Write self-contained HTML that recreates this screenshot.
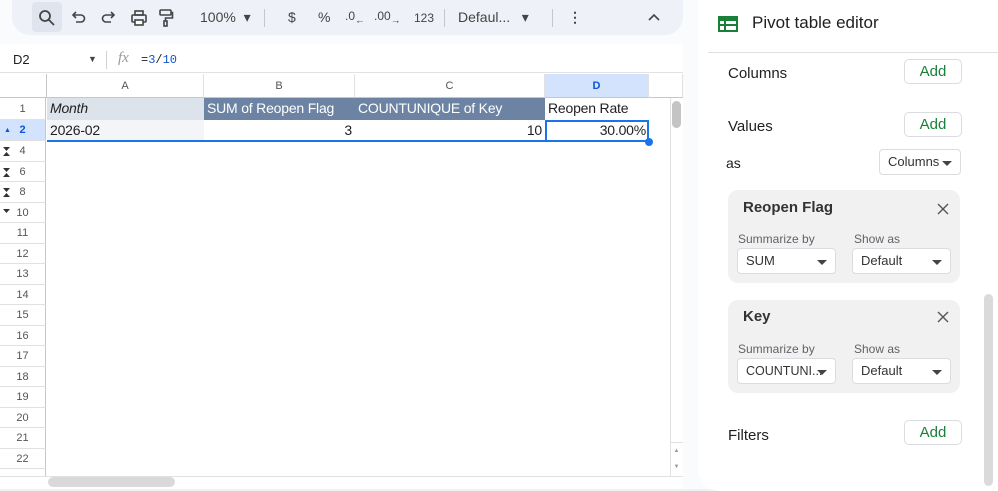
<!DOCTYPE html><html><head><style>
*{box-sizing:border-box;margin:0;padding:0}
body{width:998px;height:491px;overflow:hidden;background:#f9fbfd;font-family:"Liberation Sans",Arial,sans-serif;position:relative;color:#1f1f1f}
.a{position:absolute}
.tb{left:12px;top:0;width:671px;height:35px;background:#eef2f8;border-radius:0 0 18px 18px}
.ti{position:absolute;top:9px;font-size:14px;color:#444}
.sheet{left:0;top:44px;width:683px;height:447px;background:#fff}
.rh{left:0;width:46px;font-size:11px;color:#555;text-align:center;border-bottom:1px solid #e1e1e1;border-right:1px solid #c7c7c7;background:#fff}
.ch{top:74px;height:24px;font-size:11px;color:#555;text-align:center;line-height:24px;border-right:1px solid #e1e1e1;border-bottom:1px solid #c7c7c7;background:#fff}
.cell{font-size:14px;line-height:21px;padding:0 3px;white-space:nowrap;letter-spacing:-0.2px}
.panel{left:698px;top:0;width:300px;height:491px;background:#fff;border-radius:0 0 0 22px}
.lbl{font-size:15px;color:#1f1f1f}
.add{width:58px;height:25px;border:1px solid #dadce0;border-radius:5px;color:#188038;font-size:15px;text-align:center;line-height:23px;background:#fff}
.card{left:728px;width:232px;background:#f1f1f1;border-radius:10px}
.sel{background:#fff;border:1px solid #dadce0;border-radius:4px;height:26px;font-size:13px;line-height:24px;padding-left:8px;color:#333;white-space:nowrap;overflow:hidden}
.car{position:absolute;right:8px;top:11px;border-left:5px solid transparent;border-right:5px solid transparent;border-top:5px solid #444}
.sm{font-size:12px;color:#5f6368}
svg.i{position:absolute;top:9px}
</style></head><body>
<div class="a tb">
<div class="a" style="left:20px;top:2px;width:30px;height:30px;background:#dfe5ee;border-radius:4px"></div>
<svg class="i" style="left:26px" width="18" height="18" viewBox="0 0 18 18" fill="none" stroke="#444" stroke-width="1.8"><circle cx="7" cy="7" r="5"/><line x1="10.5" y1="10.5" x2="16" y2="16"/></svg>
<svg class="i" style="left:58px" width="16" height="16" viewBox="0 0 16 16" fill="none" stroke="#444" stroke-width="1.6"><path d="M4 6h7a3.5 3.5 0 010 7H6"/><path d="M6 3L3 6l3 3"/></svg>
<svg class="i" style="left:89px" width="16" height="16" viewBox="0 0 16 16" fill="none" stroke="#444" stroke-width="1.6"><path d="M12 6H5a3.5 3.5 0 000 7h5"/><path d="M10 3l3 3-3 3"/></svg>
<svg class="i" style="left:118px" width="18" height="18" viewBox="0 0 18 18" fill="none" stroke="#444" stroke-width="1.6"><rect x="5" y="2" width="8" height="4"/><rect x="2" y="6" width="14" height="7" rx="1"/><rect x="5" y="11" width="8" height="5" fill="#fff"/></svg>
<svg class="i" style="left:146px" width="16" height="18" viewBox="0 0 16 18" fill="none" stroke="#444" stroke-width="1.6"><rect x="2" y="1" width="11" height="5" rx="1"/><path d="M13 3.5h1.5V9H7.5v3"/><rect x="6" y="12" width="3" height="5"/></svg>
<span class="ti" style="left:188px">100% &nbsp;&#9662;</span>
<div class="a" style="left:252px;top:9px;width:1px;height:18px;background:#c7c7c7"></div>
<span class="ti" style="left:276px">$</span>
<span class="ti" style="left:306px">%</span>
<span class="ti" style="left:333px;font-size:12px">.0<sub>&#8592;</sub></span>
<span class="ti" style="left:362px;font-size:12px">.00<sub>&#8594;</sub></span>
<span class="ti" style="left:402px;font-size:12px;top:11px">123</span>
<div class="a" style="left:432px;top:9px;width:1px;height:18px;background:#c7c7c7"></div>
<span class="ti" style="left:446px">Defaul... &nbsp;&nbsp;&#9662;</span>
<div class="a" style="left:540px;top:9px;width:1px;height:18px;background:#c7c7c7"></div>
<span class="ti" style="left:556px;font-weight:bold">&#8942;</span>
<svg class="i" style="left:636px;top:13px" width="12" height="8" viewBox="0 0 12 8" fill="none" stroke="#444" stroke-width="1.6"><path d="M1 7l5-5 5 5"/></svg>
</div>
<div class="a sheet"></div>
<div class="a" style="left:0;top:47px;width:683px;height:26px;background:#fff;border-bottom:1px solid #e1e1e1"></div>
<span class="a" style="left:13px;top:52px;font-size:13px">D2</span>
<span class="a" style="left:88px;top:54px;font-size:9px;color:#444">&#9660;</span>
<div class="a" style="left:106px;top:51px;width:1px;height:18px;background:#d0d0d0"></div>
<span class="a" style="left:118px;top:50px;font-size:15px;color:#999;font-style:italic;font-family:'Liberation Serif',serif">fx</span>
<span class="a" style="left:141px;top:53px;font-size:12px;font-family:'Liberation Mono',monospace">=<span style="color:#1155cc">3</span>/<span style="color:#1155cc">10</span></span>
<div class="a" style="left:0;top:74px;width:47px;height:24px;background:#fff;border-right:1px solid #c7c7c7;border-bottom:1px solid #c7c7c7"></div>
<div class="a ch" style="left:47px;width:157px">A</div>
<div class="a ch" style="left:204px;width:151px">B</div>
<div class="a ch" style="left:355px;width:190px">C</div>
<div class="a ch" style="left:545px;width:104px;background:#d3e3fd;color:#0b57d0;font-weight:bold">D</div>
<div class="a ch" style="left:649px;width:34px"></div>
<div class="a rh" style="top:98px;height:22px;line-height:22px">1</div>
<div class="a rh" style="top:120px;height:21px;line-height:21px;background:#d3e3fd;color:#0b57d0;font-weight:bold"><span style="font-size:7px;position:absolute;left:4px">&#9650;</span>2</div>
<div id="rows"></div>
<div class="a cell" style="left:47px;top:98px;width:157px;height:22px;background:#dde3ea;font-style:italic">Month</div>
<div class="a cell" style="left:204px;top:98px;width:151px;height:22px;background:#6d83a3;color:#fff">SUM of Reopen Flag</div>
<div class="a cell" style="left:355px;top:98px;width:190px;height:22px;background:#6d83a3;color:#fff">COUNTUNIQUE of Key</div>
<div class="a cell" style="left:545px;top:98px;width:104px;height:22px">Reopen Rate</div>
<div class="a cell" style="left:47px;top:120px;width:157px;height:21px;background:#f3f5f8">2026-02</div>
<div class="a cell" style="left:204px;top:120px;width:151px;height:21px;text-align:right">3</div>
<div class="a cell" style="left:355px;top:120px;width:190px;height:21px;text-align:right">10</div>
<div class="a cell" style="left:545px;top:120px;width:104px;height:21px;text-align:right">30.00%</div>
<div class="a" style="left:47px;top:140px;width:500px;height:2px;background:#1a73e8"></div>
<div class="a" style="left:545px;top:120px;width:104px;height:22px;border:2px solid #1a73e8"></div>
<div class="a" style="left:645px;top:138px;width:8px;height:8px;border-radius:50%;background:#1a73e8"></div>
<div class="a" style="left:672px;top:101px;width:9px;height:27px;background:#c4c4c4;border-radius:5px"></div>
<div class="a" style="left:670px;top:98px;width:1px;height:378px;background:#e1e1e1"></div>
<div class="a" style="left:670px;top:442px;width:13px;height:34px;border-top:1px solid #e1e1e1;font-size:6px;color:#999;text-align:center;line-height:16px">&#9650;<br>&#9660;</div>
<div class="a" style="left:0;top:476px;width:683px;height:13px;border-top:1px solid #e1e1e1;background:#fff"></div>
<div class="a" style="left:48px;top:477px;width:127px;height:10px;background:#d9d9d9;border-radius:5px"></div>
<div class="a" style="left:0;top:489px;width:998px;height:2px;background:#eef1f5"></div>
<div class="a" style="left:702px;top:230px;font-size:10px;color:#666;line-height:6px">&#9679;<br>&#9679;<br>&#9679;</div>
<div class="a panel"></div>
<div class="a" style="left:708px;top:52px;width:290px;height:1px;background:#e0e0e0"></div>
<svg class="a" style="left:718px;top:16px" width="20" height="16" viewBox="0 0 20 16"><rect x="1" y="1" width="18" height="14" fill="none" stroke="#188038" stroke-width="2"/><rect x="1" y="1" width="18" height="4" fill="#188038"/><line x1="1" y1="9" x2="19" y2="9" stroke="#188038" stroke-width="2"/><line x1="7" y1="5" x2="7" y2="15" stroke="#188038" stroke-width="2"/></svg>
<span class="a" style="left:752px;top:13px;font-size:17px">Pivot table editor</span>
<span class="a lbl" style="left:728px;top:65px">Columns</span>
<div class="a add" style="left:904px;top:59px">Add</div>
<span class="a lbl" style="left:728px;top:118px">Values</span>
<div class="a add" style="left:904px;top:112px">Add</div>
<span class="a" style="left:726px;top:155px;font-size:14px">as</span>
<div class="a sel" style="left:879px;top:149px;width:82px;height:26px;padding-left:8px">Columns<span class="car"></span></div>
<div class="a card" style="top:190px;height:93px"></div>
<span class="a" style="left:743px;top:199px;font-size:15px;font-weight:bold;color:#333">Reopen Flag</span>
<svg class="a" style="left:937px;top:203px" width="12" height="12" viewBox="0 0 12 12" stroke="#555" stroke-width="1.4"><path d="M1 1l10 10M11 1L1 11"/></svg>
<span class="a sm" style="left:738px;top:232px">Summarize by</span>
<span class="a sm" style="left:854px;top:232px">Show as</span>
<div class="a sel" style="left:737px;top:248px;width:99px">SUM<span class="car"></span></div>
<div class="a sel" style="left:852px;top:248px;width:99px">Default<span class="car"></span></div>
<div class="a card" style="top:300px;height:93px"></div>
<span class="a" style="left:743px;top:308px;font-size:15px;font-weight:bold;color:#333">Key</span>
<svg class="a" style="left:937px;top:311px" width="12" height="12" viewBox="0 0 12 12" stroke="#555" stroke-width="1.4"><path d="M1 1l10 10M11 1L1 11"/></svg>
<span class="a sm" style="left:738px;top:342px">Summarize by</span>
<span class="a sm" style="left:854px;top:342px">Show as</span>
<div class="a sel" style="left:737px;top:358px;width:99px;font-size:12.5px">COUNTUNI... <span class="car"></span></div>
<div class="a sel" style="left:852px;top:358px;width:99px">Default<span class="car"></span></div>
<span class="a lbl" style="left:728px;top:427px">Filters</span>
<div class="a add" style="left:904px;top:420px">Add</div>
<div class="a" style="left:984px;top:294px;width:9px;height:192px;background:#dadada;border-radius:5px"></div>
<script>
var r=[["4","x"],["6","x"],["8","x"],["10","d"]];for(var i=11;i<=22;i++)r.push([""+i,""]);
var h="";for(var k=0;k<r.length;k++){var t=141+k*20.5;var ic=r[k][1]=="x"?'<svg style="position:absolute;left:3px;top:6px" width="7" height="9" viewBox="0 0 7 9"><path d="M0 0h7L3.5 4z M0 9h7L3.5 5z" fill="#333"/></svg>':r[k][1]=="d"?'<svg style="position:absolute;left:3px;top:6px" width="7" height="5" viewBox="0 0 7 5"><path d="M0 0h7L3.5 4z" fill="#333"/></svg>':'';
h+='<div class="a rh" style="top:'+t+'px;height:20.5px;line-height:20px">'+ic+r[k][0]+'</div>';}
h+='<div class="a rh" style="top:'+(141+r.length*20.5)+'px;height:8px;border-bottom:none"></div>';
document.getElementById("rows").innerHTML=h;
</script>
</body></html>
